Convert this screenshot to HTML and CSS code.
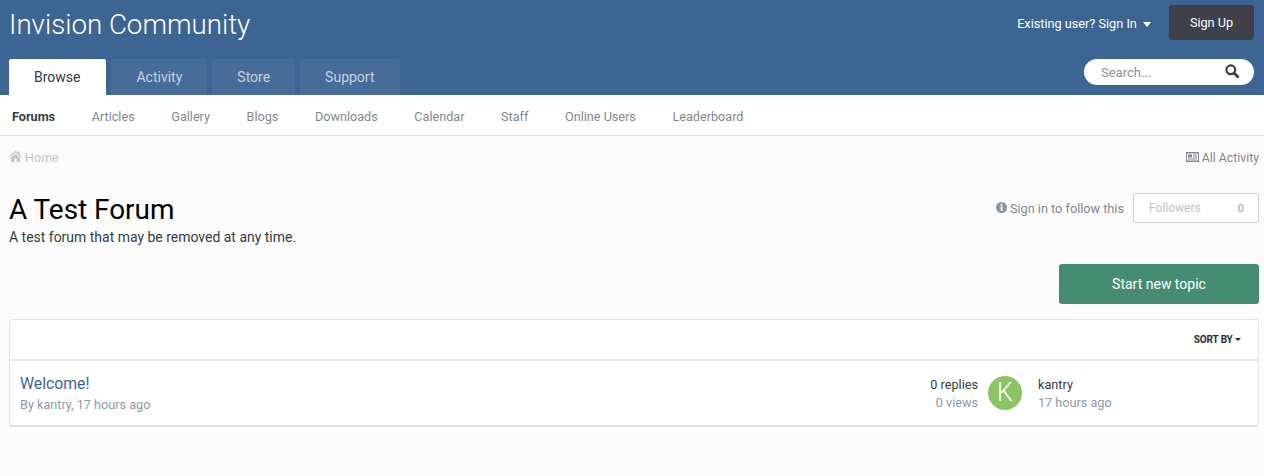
FILE: index.html
```html
<!DOCTYPE html>
<html lang="en">
<head>
<meta charset="utf-8">
<title>A Test Forum - Invision Community</title>
<link rel="stylesheet" href="styles.css">
</head>
<body>
<header class="site-header">
  <div class="brand-row">
    <a class="logo">Invision Community</a>
    <div class="user-links">
      <a class="sign-in">Existing user? Sign In <span class="caret caret-white"></span></a>
      <a class="sign-up">Sign Up</a>
    </div>
  </div>
  <div class="tab-row">
    <nav class="tabs">
      <a class="tab tab-active">Browse</a>
      <a class="tab">Activity</a>
      <a class="tab">Store</a>
      <a class="tab">Support</a>
    </nav>
    <div class="search">
      <span class="search-text">Search...</span>
      <svg class="search-icon" viewBox="0 0 14 14" width="14" height="14"><circle cx="5.8" cy="5.8" r="4.4" fill="none" stroke="#3d3d3d" stroke-width="2.2"/><path d="M9 9l3.800 3.800" stroke="#3d3d3d" stroke-width="2.800" stroke-linecap="round"/></svg>
    </div>
  </div>
</header>
<nav class="subnav">
  <a class="sub-active">Forums</a>
  <a>Articles</a>
  <a>Gallery</a>
  <a>Blogs</a>
  <a>Downloads</a>
  <a>Calendar</a>
  <a>Staff</a>
  <a>Online Users</a>
  <a>Leaderboard</a>
</nav>
<main class="content">
  <div class="crumbs">
    <a class="home">
      <svg viewBox="0 0 13 11" width="13" height="11"><path d="M6.5 0L0 5.6l.7.8L6.5 1.5l5.8 4.9.7-.8-2.4-2V.6H9v1.6zM2 6.6V11h3.4V7.6h2.2V11H11V6.6L6.500 2.800z" fill="#c4c4c4"/></svg>
      Home
    </a>
    <a class="all-activity">
      <svg viewBox="0 0 13 10" width="13" height="10"><path fill-rule="evenodd" d="M0 0h13v10H0zM1 1.500v7h11v-7zM2 2.500h4v3H2zM7 2.500h4v1H7zM7 4.500h4v1H7zM2 6.500h9v1H2z" fill="#83878d"/></svg>
      All Activity
    </a>
  </div>
  <section class="page-head">
    <div>
      <h1>A Test Forum</h1>
      <p class="desc">A test forum that may be removed at any time.</p>
    </div>
    <div class="follow">
      <span class="follow-text">
        <svg viewBox="0 0 12 12" width="11" height="11"><circle cx="6" cy="6" r="6" fill="#8a95a3"/><rect x="5" y="5" width="2.200" height="4.500" fill="#fcfcfc"/><rect x="5" y="2.300" width="2.200" height="1.800" fill="#fcfcfc"/></svg>
        Sign in to follow this
      </span>
      <span class="followers"><span>Followers</span><span class="count">0</span></span>
    </div>
  </section>
  <div class="actions"><a class="start-topic">Start new topic</a></div>
  <section class="card">
    <div class="card-bar"><a class="sort">SORT BY <span class="caret caret-dark"></span></a></div>
    <article class="topic">
      <div class="topic-main">
        <a class="topic-title">Welcome!</a>
        <div class="meta">By kantry, 17 hours ago</div>
      </div>
      <div class="stats">
        <div class="replies">0 replies</div>
        <div class="meta">0 views</div>
      </div>
      <div class="avatar">K</div>
      <div class="last">
        <div class="last-name">kantry</div>
        <div class="meta">17 hours ago</div>
      </div>
    </article>
  </section>
</main>
</body>
</html>
```
FILE: styles.css
```css
* { box-sizing: border-box; }
html, body { margin: 0; padding: 0; }
body {
  height: 476px;
  overflow: hidden;
  background: #fcfcfc;
  font-family: Roboto, "Liberation Sans", sans-serif;
  font-size: 13px;
  color: #353c41;
}
a { display: block; }
.site-header { background: #3d6594; height: 95px; padding: 0 10px 0 9px; display: flex; flex-direction: column; }
.brand-row { height: 59px; display: flex; justify-content: space-between; align-items: flex-start; }
.logo { font-size: 27.700px; font-weight: 300; color: #fff; line-height: 33px; margin-top: 8px; }
.user-links { display: flex; align-items: flex-start; margin-top: 5px; }
.sign-in { color: #fff; font-size: 12.700px; line-height: 38px; margin-right: 18px; }
.caret { display: inline-block; width: 0; height: 0; vertical-align: middle; }
.caret-white { border-left: 4.500px solid transparent; border-right: 4.500px solid transparent; border-top: 5px solid #fff; margin-left: 3px; margin-top: -1px; }
.caret-dark { border-left: 3.500px solid transparent; border-right: 3.500px solid transparent; border-top: 3.500px solid #262e33; margin-top: -2px; }
.sign-up { width: 85px; height: 35px; background: #3f4149; color: #fff; border-radius: 3px; text-align: center; line-height: 35px; font-size: 12.700px; }
.tab-row { flex: 1; display: flex; justify-content: space-between; align-items: flex-start; }
.tabs { display: flex; gap: 5px; height: 36px; }
.tab { height: 36px; padding: 0 25px; line-height: 36px; font-size: 14px; color: rgba(255,255,255,.7); background: rgba(255,255,255,.05); border-radius: 2px 2px 0 0; }
.tab-active { background: #fff; color: #353c41; padding-right: 26px; }
.search { width: 170px; height: 26px; background: #fff; border-radius: 13px; display: flex; align-items: center; justify-content: space-between; padding: 0 15px 0 17px; }
.search-text { font-size: 13px; line-height: 16px; padding-top: 2px; color: #8f8f8f; }
.search-icon { margin-top: -3px; }
.subnav { height: 41px; background: #fff; border-bottom: 1px solid #e0e0e0; display: flex; gap: 36.600px; padding-left: 12px; line-height: 43px; font-size: 12.650px; color: #83878d; }
.sub-active { font-weight: 700; color: #353c41; }
.content { padding: 0 5px 0 9px; }
.crumbs { display: flex; justify-content: space-between; align-items: center; padding-top: 10px; height: 33px; line-height: 16px; font-size: 12.500px; }
.home { color: #c4c4c4; }
.all-activity { color: #83878d; font-size: 12.300px; }
.page-head { display: flex; justify-content: space-between; align-items: flex-start; margin-top: 10px; }
h1 { margin: 15px 0 0; font-size: 27.900px; font-weight: 400; color: #000; line-height: 32px; }
.desc { margin: 1px 0 0; font-size: 13.980px; line-height: 20px; color: #353c41; }
.follow { display: flex; align-items: center; gap: 9px; margin-top: 14px; }
.follow-text { color: #83878d; font-size: 12.700px; }
.followers { width: 126px; height: 30px; border: 1px solid #cfd3d8; border-radius: 3px; background: #fff; display: flex; justify-content: space-between; align-items: center; padding: 0 14px 0 15px; color: #bcc3cc; font-size: 12px; }
.count { color: #9a9ea3; font-size: 11px; }
.actions { display: flex; justify-content: flex-end; margin-top: 17px; }
.start-topic { width: 200px; height: 40px; background: #468c73; color: #fff; border-radius: 3px; text-align: center; line-height: 40px; font-size: 14px; }
.card { margin-top: 15px; background: #fff; border: 1px solid #e4e4e4; border-bottom: 2px solid #e0e0e0; border-radius: 3px; height: 108px; }
.card-bar { height: 41px; border-bottom: 2px solid #e8e8e8; display: flex; justify-content: flex-end; align-items: center; padding-right: 17px; }
.sort { font-size: 10px; letter-spacing: -0.15px; font-weight: 700; color: #262e33; }
.topic { height: 65px; display: flex; align-items: center; padding: 0 10px; }
.topic-main { flex: 1; }
.topic-title { font-size: 15.800px; line-height: 22px; color: #3d6594; }
.meta { font-size: 12.650px; line-height: 18px; color: #8d9aa6; }
.topic-main .meta { margin-top: 1px; }
.stats { text-align: right; width: 90px; }
.replies { font-size: 12.700px; line-height: 19px; color: #353c41; }
.avatar { width: 34px; height: 34px; border-radius: 50%; background: #8ac565; color: #fff; text-align: center; line-height: 34px; font-size: 25px; font-weight: 300; margin: -2px 16px 0 10px; }
.last { width: 210px; }
.last-name { font-size: 12.700px; line-height: 19px; color: #353c41; }
```
